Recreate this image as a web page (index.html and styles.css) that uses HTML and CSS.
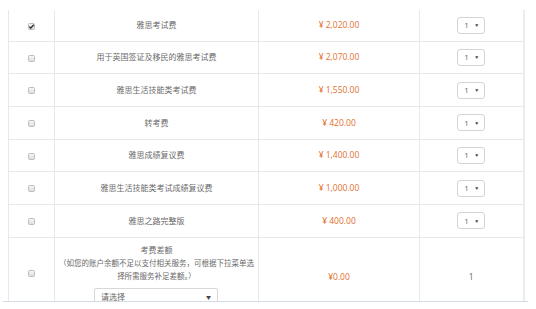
FILE: index.html
```html
<!DOCTYPE html>
<html lang="zh-CN">
<head>
    <meta charset="UTF-8">
    <title>考试费用</title>
    <link rel="stylesheet" href="styles.css">
</head>
<body>

    <table class="fee-table">
        <colgroup>
            <col class="col-check">
            <col class="col-name">
            <col class="col-price">
            <col class="col-qty">
        </colgroup>
        <tr class="row-first">
            <td><span class="check is-checked"><svg viewBox="0 0 8 8" width="7" height="7"><path d="M1.5 4.2 L3.2 5.8 L6.6 2" fill="none" stroke="#333" stroke-width="1.6"/></svg></span></td>
            <td>雅思考试费</td>
            <td class="price">¥ 2,020.00</td>
            <td><span class="qty"><span>1</span><span class="arrow">▼</span></span></td>
        </tr>
        <tr>
            <td><span class="check"></span></td>
            <td>用于英国签证及移民的雅思考试费</td>
            <td class="price">¥ 2,070.00</td>
            <td><span class="qty"><span>1</span><span class="arrow">▼</span></span></td>
        </tr>
        <tr>
            <td><span class="check"></span></td>
            <td>雅思生活技能类考试费</td>
            <td class="price">¥ 1,550.00</td>
            <td><span class="qty"><span>1</span><span class="arrow">▼</span></span></td>
        </tr>
        <tr>
            <td><span class="check"></span></td>
            <td>转考费</td>
            <td class="price">¥ 420.00</td>
            <td><span class="qty"><span>1</span><span class="arrow">▼</span></span></td>
        </tr>
        <tr>
            <td><span class="check"></span></td>
            <td>雅思成绩复议费</td>
            <td class="price">¥ 1,400.00</td>
            <td><span class="qty"><span>1</span><span class="arrow">▼</span></span></td>
        </tr>
        <tr>
            <td><span class="check"></span></td>
            <td>雅思生活技能类考试成绩复议费</td>
            <td class="price">¥ 1,000.00</td>
            <td><span class="qty"><span>1</span><span class="arrow">▼</span></span></td>
        </tr>
        <tr>
            <td><span class="check"></span></td>
            <td>雅思之路完整版</td>
            <td class="price">¥ 400.00</td>
            <td><span class="qty"><span>1</span><span class="arrow">▼</span></span></td>
        </tr>
        <tr class="row-last">
            <td><span class="check"></span></td>
            <td class="cell-top">
                <div class="note-title">考费差额</div>
                <div class="note">（如您的账户余额不足以支付相关服务，可根据下拉菜单选<br>择所需服务补足差额。）</div>
                <div class="pick"><span>请选择</span><span class="arrow">▼</span></div>
            </td>
            <td class="price">¥0.00</td>
            <td class="qty-plain">1</td>
        </tr>
    </table>

    <!-- white bar that sits over the bottom of the table -->
    <div class="page-foot"></div>

</body>
</html>
```

FILE: styles.css
```css
* {
    margin: 0;
    padding: 0;
    box-sizing: border-box;
}
body {
    background: #fff;
    font-family: "Noto Sans CJK SC", "Noto Sans", sans-serif;
    font-size: 8px;
    color: #6a6a6a;
}
.fee-table {
    margin: 10px 0 0 8px;
    width: 515px;
    border-collapse: collapse;
    table-layout: fixed;
}
.col-check {
    width: 46px;
}
.col-name {
    width: 204px;
}
.col-price {
    width: 161px;
}
.col-qty {
    width: 104px;
}
.fee-table td {
    border: 1px solid #e8e8e8;
    text-align: center;
    vertical-align: middle;
    padding: 0 4px;
    line-height: 12px;
}
.fee-table tr {
    height: 32.7px;
}
.fee-table .row-first {
    height: 31px;
}
.fee-table .row-first td {
    border-top: none;
}
.fee-table .row-last {
    height: 72px;
}
.fee-table td:last-child {
    border-right: 2px solid #ececec;
}
.check {
    display: inline-block;
    width: 7px;
    height: 7px;
    border: 1px solid #bcbcbc;
    border-radius: 1.5px;
    background: linear-gradient(#f6f6f6, #dedede);
    vertical-align: middle;
    position: relative;
}
.check svg {
    position: absolute;
    left: -1px;
    top: -1px;
}
.price {
    color: #e2702f;
    font-family: "Open Sans", sans-serif;
    font-size: 8.5px;
}
.qty {
    display: inline-flex;
    align-items: center;
    justify-content: space-between;
    width: 28px;
    height: 17px;
    padding: 0 5px 0 6px;
    border: 1px solid #d4d4d4;
    border-radius: 3px;
    font-family: "Open Sans", sans-serif;
    font-size: 8px;
    color: #666;
    vertical-align: middle;
}
.arrow {
    font-size: 5px;
    color: #444;
}
.qty-plain {
    font-family: "Open Sans", sans-serif;
    font-size: 8.5px;
    padding-top: 8px !important;
}
.fee-table .row-last .price {
    padding-top: 8px;
}
.cell-top {
    vertical-align: top !important;
    padding-top: 5px !important;
}
.note-title {
    line-height: 13px;
}
.note {
    font-size: 7.5px;
    line-height: 13px;
    white-space: nowrap;
}
.pick {
    display: flex;
    align-items: center;
    justify-content: space-between;
    width: 124px;
    height: 18px;
    margin: 6px 0 0 35px;
    padding: 0 6px 0 6px;
    border: 1px solid #d8d8d8;
    border-radius: 2px;
    color: #666;
}
.page-foot {
    position: fixed;
    left: 3px;
    top: 301px;
    width: 525px;
    height: 8px;
    background: #fff;
    border-top: 1px solid #d3dce5;
}
```
